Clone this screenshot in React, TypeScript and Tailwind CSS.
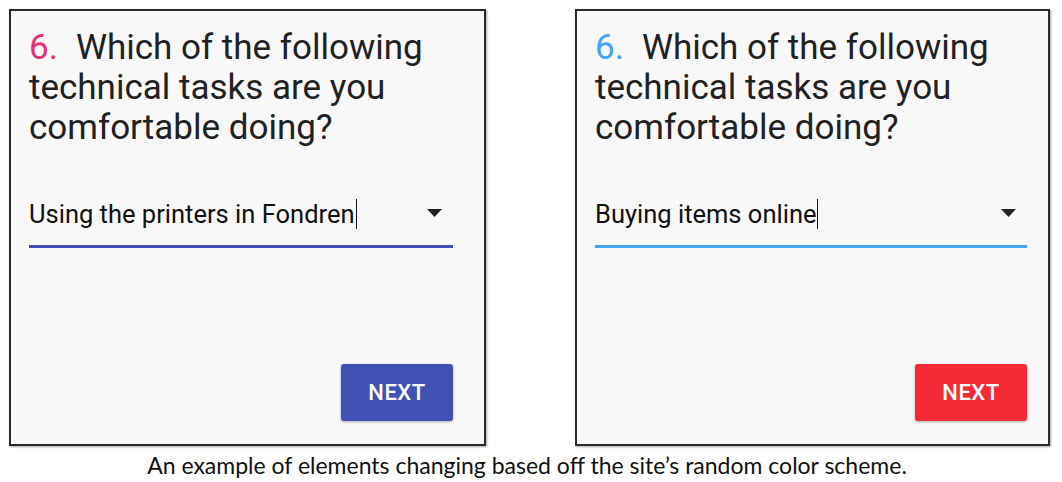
import React from "react";

type PanelProps = {
  numColor: string;
  answer: string;
  selectW: string;
  underline: string;
  btn: string;
  width: string;
};

function Panel({ numColor, answer, selectW, underline, btn, width }: PanelProps) {
  return (
    <div
      className={`${width} h-[437px] border-2 border-[#2b2b2b] bg-[#f8f8f8] shadow-[1px_1px_2px_rgba(0,0,0,0.35)] flex flex-col pl-[18px] pt-[17px]`}
    >
      <div className="text-[35px] leading-[40px] text-[#212121]" style={{ fontFamily: "Roboto, sans-serif" }}>
        <span className={numColor}>6.</span>
        <span className="ml-[18px]">Which of the following</span>
        <br />
        technical tasks are you
        <br />
        comfortable doing?
      </div>
      <div className={`${selectW} mt-[50px] border-b-[3px] ${underline} pb-[15px] flex items-center`}>
        <div
          className="flex-1 text-[25.5px] leading-[32px] text-[#111] flex items-center"
          style={{ fontFamily: "Roboto, sans-serif" }}
        >
          <span>{answer}</span>
          <span className="inline-block w-[1px] h-[30px] bg-[#111] ml-[1px]" />
        </div>
        <svg width="15" height="8" viewBox="0 0 15 8" className="mr-[11px] mb-[2px]">
          <path d="M0 0 L15 0 L7.5 8 Z" fill="#222" />
        </svg>
      </div>
      <div className="flex-1" />
      <div className={`${selectW} flex justify-end pb-[23px]`}>
        <button
          className={`${btn} w-[112px] h-[57px] rounded-[3px] text-white text-[22px] font-medium tracking-[0.5px] shadow-[0_1px_3px_rgba(0,0,0,0.3)]`}
          style={{ fontFamily: "Roboto, sans-serif" }}
        >
          NEXT
        </button>
      </div>
    </div>
  );
}

export default function App() {
  return (
    <div className="w-[1062px] h-[482px] bg-white relative overflow-hidden">
      <div className="flex pt-[9px] pl-[9px] gap-[89px]">
        <Panel
          width="w-[477px]"
          numColor="text-[#ee2d7a]"
          answer="Using the printers in Fondren"
          selectW="w-[424px]"
          underline="border-[#3f51b5]"
          btn="bg-[#3f51b5]"
        />
        <Panel
          width="w-[475px]"
          numColor="text-[#42a5f5]"
          answer="Buying items online"
          selectW="w-[432px]"
          underline="border-[#42a5f5]"
          btn="bg-[#f42a36]"
        />
      </div>
      <div
        className="text-center text-[23px] leading-[26px] text-[#111] mt-[6px] pr-[8px]"
        style={{ fontFamily: "Lato, sans-serif" }}
      >
        An example of elements changing based off the site’s random color scheme.
      </div>
    </div>
  );
}
